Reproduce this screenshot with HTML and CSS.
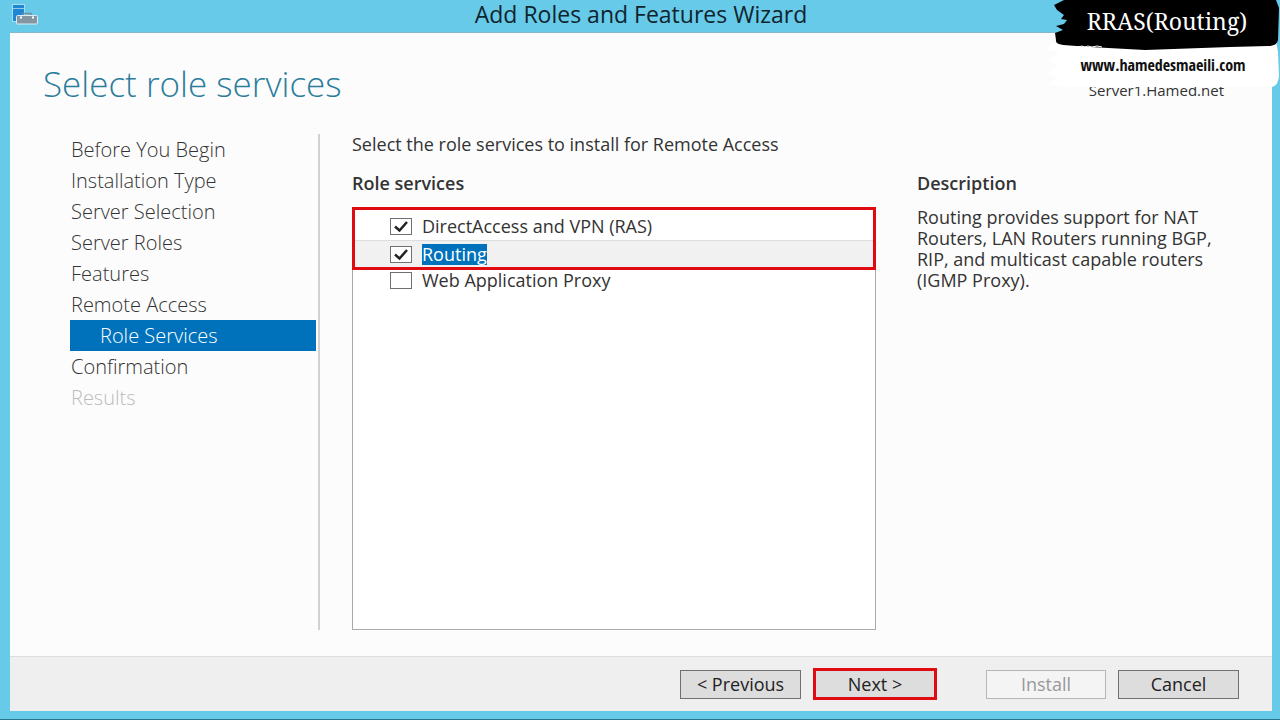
FILE: index.html
```html
<!DOCTYPE html>
<html lang="en">
<head>
<meta charset="utf-8">
<title>Add Roles and Features Wizard</title>
<link rel="stylesheet" href="styles.css">
</head>
<body>
<div class="window">
  <header class="titlebar">
    <svg class="app-icon" width="26" height="22" viewBox="0 0 26 22" aria-hidden="true">
      <rect x=".5" y=".5" width="12" height="17" fill="#1f86d2" stroke="#a9dcf5"/>
      <path d="M1 4.500h11" stroke="#8fc9ee"/>
      <path d="M11 11V9.500h8V11" fill="none" stroke="#71909f" stroke-width="1.500"/>
      <rect x="4.500" y="11.500" width="21" height="8.500" rx="1" fill="#8496a3" stroke="#dcecf3"/>
      <path d="M8 13.500h2M20 13.500h2" stroke="#fff" stroke-width="2"/>
    </svg>
    <span class="window-title">Add Roles and Features Wizard</span>
  </header>
  <div class="frame">
    <div class="heading">
      <h1>Select role services</h1>
      <span class="server">Server1.Hamed.net</span>
    </div>
    <div class="columns">
      <nav class="steps" aria-label="Wizard steps">
        <a href="#" class="step">Before You Begin</a>
        <a href="#" class="step">Installation Type</a>
        <a href="#" class="step">Server Selection</a>
        <a href="#" class="step">Server Roles</a>
        <a href="#" class="step">Features</a>
        <a href="#" class="step">Remote Access</a>
        <a href="#" class="step current" aria-current="step">Role Services</a>
        <a href="#" class="step">Confirmation</a>
        <a class="step disabled">Results</a>
      </nav>
      <main class="content">
        <p class="intro">Select the role services to install for Remote Access</p>
        <div class="panes">
          <section class="services">
            <h2>Role services</h2>
            <div class="list">
              <label class="row"><input type="checkbox" checked><span class="name">DirectAccess and VPN (RAS)</span></label>
              <label class="row active"><input type="checkbox" checked><span class="name">Routing</span></label>
              <label class="row"><input type="checkbox"><span class="name">Web Application Proxy</span></label>
              <div class="highlight"></div>
            </div>
          </section>
          <section class="description">
            <h2>Description</h2>
            <p>Routing provides support for NAT Routers, LAN Routers running BGP, RIP, and multicast capable routers (IGMP Proxy).</p>
          </section>
        </div>
      </main>
    </div>
    <footer class="actions">
      <button type="button">&lt; Previous</button>
      <button type="button" class="next">Next &gt;</button>
      <button type="button" class="install" disabled>Install</button>
      <button type="button">Cancel</button>
    </footer>
  </div>
  <aside class="banner">
    <svg class="brush" width="240" height="92" viewBox="0 0 240 92" aria-hidden="true">
      <path d="M12 44L24 42L236 40L238 52L239 76Q238 86 232 87H30L8 84L17 78L6 73L18 66L8 59L20 53L4 49Z" fill="#fff"/>
      <path d="M24 0H236L239 8L238 40Q237 46 228 46L190 47L105 50L50 47L23 45Q15 44 16 40L15 33L23 30L16 26L24 24L27 20L21 19L24 15L17 10L14 5Z" fill="#000"/>
      <path d="M38 47l4-1 3 1 3-1 4 1 5-1 5 1" fill="none" stroke="#fff"/>
    </svg>
    <div class="banner-text">
      <strong class="topic">RRAS(Routing)</strong>
      <span class="site">www.hamedesmaeili.com</span>
    </div>
  </aside>
</div>
</body>
</html>
```
FILE: styles.css
```css
* { box-sizing: border-box; }

body {
  margin: 0;
  font-family: "Open Sans", "Noto Sans", sans-serif;
  font-size: 18px;
  color: #333;
}

h1, h2, p { margin: 0; }

.window {
  position: relative;
  display: flex;
  flex-direction: column;
  min-height: 100vh;
  padding: 0 8px 8px 10px;
  background: #67cae9;
  border-bottom: 1px solid #287590;
}

.titlebar {
  display: flex;
  height: 33px;
  border-bottom: 1px solid #87b6d0;
}

.app-icon { margin: 4px 0 0 2px; }

.window-title {
  flex: 1;
  padding-right: 28px;
  text-align: center;
  font-size: 23px;
  line-height: 28px;
  color: #10242d;
}

.frame {
  flex: 1;
  display: flex;
  flex-direction: column;
  background: #fcfcfc;
}

.heading {
  display: flex;
  justify-content: space-between;
  align-items: flex-end;
  height: 73px;
  padding: 0 48px 0 33px;
}

.heading h1 {
  font-size: 35px;
  font-weight: 300;
  line-height: 44px;
  color: #2b7d9c;
}

.server {
  font-size: 15px;
  line-height: 24px;
  margin-bottom: 4px;
}

.columns {
  flex: 1;
  display: flex;
  padding: 28px 34px 26px 60px;
}

.steps {
  width: 250px;
  padding-right: 2px;
  border-right: 2px solid #d2d2d2;
}

.step {
  display: block;
  padding-left: 1px;
  font-size: 20px;
  font-weight: 300;
  line-height: 31px;
  color: #333;
  text-decoration: none;
}

.step.current {
  padding-left: 30px;
  background: #0072bc;
  color: #fff;
}

.step.disabled { color: #bbb; }

.content {
  flex: 1;
  display: flex;
  flex-direction: column;
  padding-left: 32px;
}

.intro { line-height: 20px; }

.panes {
  flex: 1;
  display: flex;
  gap: 41px;
  padding-top: 18px;
}

.services {
  flex: 524;
  display: flex;
  flex-direction: column;
}

.description { flex: 321; }

h2 {
  font-size: 18px;
  font-weight: 600;
  line-height: 22px;
}

.description p {
  margin-top: 13px;
  padding-right: 20px;
  line-height: 21px;
}

.list {
  position: relative;
  flex: 1;
  margin-top: 13px;
  padding-top: 5px;
  background: #fff;
  border: 1px solid #aaa;
}

.row {
  display: flex;
  align-items: center;
  gap: 10px;
  height: 27px;
  padding-left: 37px;
}

.row.active {
  background: #f1f1f1;
  border-top: 1px solid #ddd;
}

.name { line-height: 21px; }

.active .name {
  background: #0072bc;
  color: #fff;
}

.row input {
  appearance: none;
  width: 22px;
  height: 17px;
  margin: 0;
  border: 1px solid #707070;
  background: #fff;
}

.row input:checked {
  background: #fff url("data:image/svg+xml,%3Csvg xmlns='http://www.w3.org/2000/svg' viewBox='0 0 20 15'%3E%3Cpath d='M4 7.500l4.500 4L16 3' fill='none' stroke='%23222' stroke-width='2.500'/%3E%3C/svg%3E") center / 20px 15px no-repeat;
}

.highlight {
  position: absolute;
  inset: -1px -1px auto;
  height: 63px;
  border: 3px solid #e00b10;
  pointer-events: none;
}

.actions {
  display: flex;
  justify-content: flex-end;
  align-items: center;
  gap: 12px;
  height: 55px;
  padding-right: 33px;
  background: #efefef;
  border-top: 1px solid #ddd;
}

.actions button {
  width: 121px;
  height: 29px;
  padding: 0;
  border: 1px solid #707070;
  background: #ddd;
  font: inherit;
  line-height: 24px;
  color: #222;
}

.actions .next {
  width: 124px;
  height: 32px;
  border: 3px solid #e00b10;
}

.actions .install {
  width: 120px;
  margin-left: 37px;
  border-color: #b5b5b5;
  background: #f4f4f4;
  color: #999;
}

.banner {
  position: absolute;
  top: 0;
  right: 0;
  width: 240px;
  height: 92px;
}

.brush {
  position: absolute;
  inset: 0;
}

.banner-text {
  position: relative;
  display: flex;
  flex-direction: column;
  align-items: center;
  padding-left: 6px;
}

.topic {
  padding-left: 8px;
  font-family: "Noto Serif", "Liberation Serif", serif;
  font-size: 23px;
  font-weight: 400;
  line-height: 42px;
  color: #fff;
}

.site {
  font-family: "Open Sans Condensed", "Liberation Sans Narrow", Lato, sans-serif;
  font-size: 16px;
  font-weight: 700;
  line-height: 46px;
  color: #111;
}
```
